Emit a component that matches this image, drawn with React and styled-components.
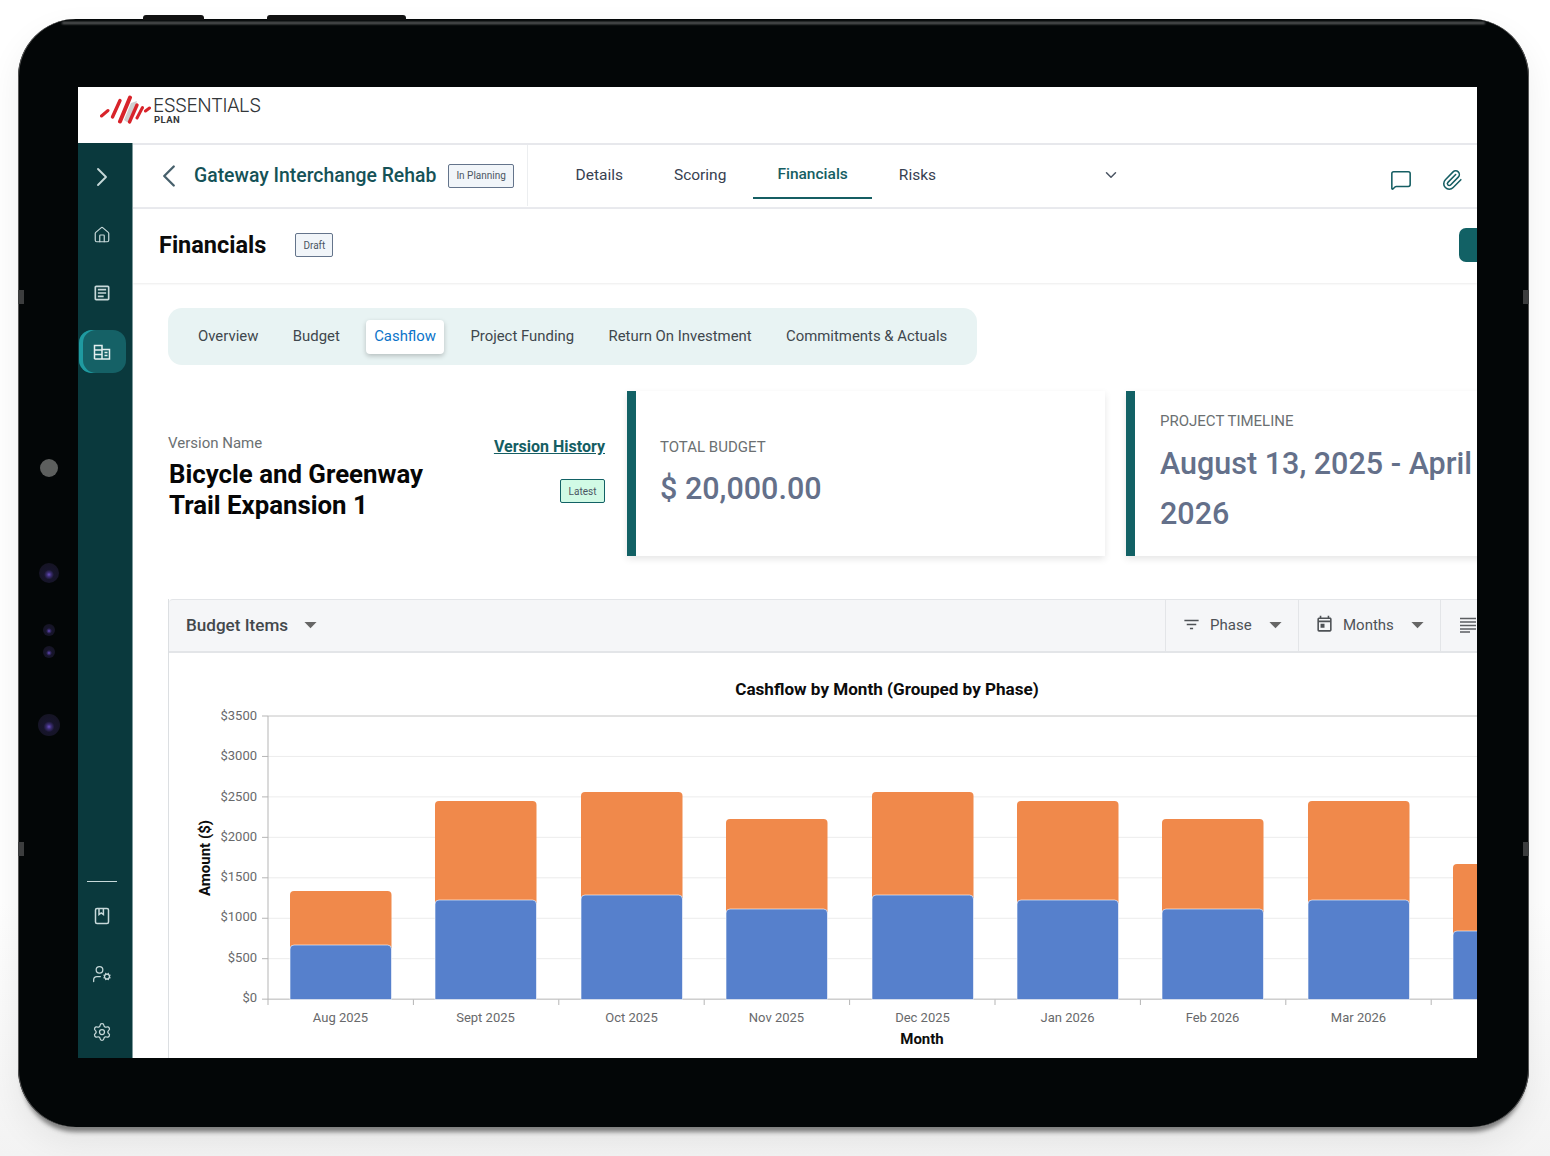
import React from "react";
import styled, { createGlobalStyle } from "styled-components";
import { ChevronRight, ChevronLeft, ChevronDown, House, UserCog, Settings, MessageSquare, Paperclip } from "lucide-react";
import { MdOutlineArticle, MdFilterList, MdOutlineToday, MdArrowDropDown } from "react-icons/md";

const Global = createGlobalStyle`
  html, body { margin: 0; padding: 0; width: 1550px; height: 1156px; overflow: hidden; background: linear-gradient(#fff 0, #fff 78%, #f3f3f3 100%); }
  * { box-sizing: border-box; }
  body { font-family: Roboto, "Liberation Sans", sans-serif; }
`;

const Stage = styled.div`
  width: 1550px;
  height: 1156px;
  padding: 19px 21px 29px 18px;
`;
const Device = styled.div`
  position: relative;
  width: 1511px;
  height: 1108px;
  padding: 68px 52px 69px 60px;
  background: #030607;
  border-radius: 58px;
  box-shadow: inset 1px 0 0 #555, inset -1px 0 0 #555, 0 9px 4px -4px rgba(60, 60, 60, 0.6), 0 14px 34px rgba(0, 0, 0, 0.07);
  &::before {
    content: "";
    position: absolute;
    left: 44px;
    right: 44px;
    top: 3px;
    height: 2px;
    background: #6a6c6d;
    filter: blur(1px);
  }
`;
const TopKey = styled.span`
  position: absolute;
  top: -4px;
  left: ${(p) => p.$x}px;
  width: ${(p) => p.$w}px;
  height: 5px;
  background: #111;
  border-radius: 3px 3px 0 0;
`;
const SideKey = styled.span`
  position: absolute;
  top: ${(p) => p.$y}px;
  ${(p) => (p.$right ? "right: 0;" : "left: 0;")}
  width: 6px;
  height: 14px;
  background: #3c3d3e;
`;
const Lens = styled.span`
  position: absolute;
  left: ${(p) => 31 - p.$r}px;
  top: ${(p) => p.$y - p.$r}px;
  width: ${(p) => p.$r * 2}px;
  height: ${(p) => p.$r * 2}px;
  border-radius: 50%;
  background: ${(p) => p.$plain ? "#5d5f5e" : "radial-gradient(circle at 50% 58%, #6a4fc0 0, #3b2d72 14%, #17152c 32%, #14131f 100%)"};
`;
const Screen = styled.div`
  width: 1399px;
  height: 971px;
  background: #fff;
  overflow: hidden;
  display: flex;
  flex-direction: column;
`;
const TopBar = styled.header`
  height: 56px;
  flex: none;
  display: flex;
  align-items: flex-start;
  padding: 8px 0 0 22px;
  gap: 2px;
`;
const LogoWords = styled.div`
  display: flex;
  flex-direction: column;
  color: #33373a;
`;
const LogoName = styled.span`
  font-size: 19px;
  font-weight: 300;
  line-height: 21px;
  letter-spacing: -0.6px;
  font-family: Inter, Roboto, sans-serif;
`;
const LogoPlan = styled.span`
  font-size: 9.5px;
  font-weight: 700;
  line-height: 11px;
  letter-spacing: 0.4px;
  margin: -2px 0 0 1px;
`;
const Body = styled.div`
  flex: 1;
  min-height: 0;
  display: flex;
`;
const SideRail = styled.nav`
  width: 55px;
  flex: none;
  background: #0a393d;
  display: flex;
  flex-direction: column;
  padding: 4px 0 0;
  color: #c7d9da;
  border-right: 1px solid #7f9a9c;
`;
const RailItem = styled.div`
  flex: none;
  height: 58px;
  display: flex;
  align-items: center;
  justify-content: center;
  padding-right: 6px;
  &:first-child { height: 59px; }
`;
const ActivePill = styled.div`
  width: 47px;
  height: 43px;
  margin-top: 1px;
  border-radius: 13px;
  background: #156166;
  box-shadow: inset 4px 0 0 #1f9aa0;
  display: flex;
  align-items: center;
  justify-content: center;
`;
const RailFoot = styled.div`
  margin-top: auto;
  margin-bottom: -3px;
  display: flex;
  flex-direction: column;
`;
const RailRule = styled.div`
  width: 30px;
  height: 1px;
  background: #c7d9da;
  margin: 0 0 5px 9px;
`;
const Main = styled.main`
  flex: 1;
  min-width: 0;
  display: flex;
  flex-direction: column;
  border-top: 2px solid #e7e8ec;
  overflow: hidden;
`;
const NavBar = styled.div`
  height: 64px;
  flex: none;
  display: flex;
  align-items: stretch;
  border-bottom: 2px solid #e9eaee;
`;
const Crumb = styled.div`
  width: 395px;
  flex: none;
  display: flex;
  align-items: center;
  margin-bottom: 1px;
  padding: 0 0 0 17px;
  border-right: 1px solid #eceef0;
  color: #47606c;
`;
const ProjectName = styled.h1`
  margin: 0 0 0 6px;
  font-size: 19.4px;
  font-weight: 500;
  color: #155257;
  white-space: nowrap;
`;
const Chip = styled.span`
  display: inline-flex;
  align-items: center;
  justify-content: center;
  height: 24px;
  padding: 0 7px;
  border: 1px solid #64748b;
  border-radius: 2px;
  background: #f1f5f9;
  color: #4b5563;
  font-size: 10px;
  margin-left: ${(p) => p.$ml || 0}px;
  white-space: nowrap;
`;
const NavTabs = styled.div`
  display: flex;
  margin-left: 23px;
  gap: 2px;
`;
const NavTab = styled.div`
  padding: ${(p) => (p.$on ? 5 : 7)}px 24.5px 0;
  display: flex;
  align-items: center;
  height: 54px;
  font-size: 15.5px;
  color: ${(p) => (p.$on ? "#155e63" : "#374151")};
  font-weight: ${(p) => (p.$on ? 500 : 400)};
  border-bottom: 2px solid ${(p) => (p.$on ? "#155e63" : "transparent")};
  white-space: nowrap;
`;
const NavCaret = styled.div`
  display: flex;
  align-items: flex-start;
  padding-top: 21px;
  margin-left: 141px;
  color: #4b5563;
`;
const NavTools = styled.div`
  margin-left: 270px;
  display: flex;
  gap: 29px;
  padding-top: 24px;
  color: #155e63;
`;
const PageHead = styled.div`
  height: 74px;
  flex: none;
  display: flex;
  align-items: center;
  padding: 0 0 2px 26px;
  box-shadow: 0 1px 2px rgba(0, 0, 0, 0.08);
`;
const PageTitle = styled.h2`
  margin: 0;
  font-size: 23.5px;
  font-weight: 700;
  color: #0b0b0b;
`;
const HeadAction = styled.div`
  margin-left: auto;
  margin-right: -60px;
  width: 78px;
  height: 34px;
  border-radius: 7px;
  background: #126165;
`;
const Content = styled.div`
  padding: 25px 0 0 35px;
  display: flex;
  flex-direction: column;
`;
const SubTabs = styled.div`
  align-self: flex-start;
  display: flex;
  align-items: center;
  gap: 17.4px;
  height: 57px;
  padding: 0 21.5px;
  background: #e8f3f3;
  border-radius: 14px;
`;
const SubTab = styled.div`
  height: 34px;
  display: flex;
  align-items: center;
  padding: 0 8.5px 1px;
  border-radius: 4px;
  font-size: 14.9px;
  color: ${(p) => (p.$on ? "#0b74c9" : "#3f474d")};
  background: ${(p) => (p.$on ? "#fff" : "transparent")};
  box-shadow: ${(p) => (p.$on ? "0 2px 5px rgba(0,0,0,.22)" : "none")};
  white-space: nowrap;
`;
const Summary = styled.section`
  display: flex;
  margin-top: 26px;
  height: 165px;
  flex: none;
`;
const VersionBlock = styled.div`
  width: 437px;
  flex: none;
  margin-right: 22px;
  display: flex;
  justify-content: space-between;
  padding-top: 43px;
`;
const VersionLabel = styled.div`
  font-size: 15px;
  line-height: 18px;
  color: #6b7072;
`;
const VersionTitle = styled.div`
  margin: 7px 0 0 1px;
  font-size: 25.8px;
  line-height: 31px;
  font-weight: 700;
  color: #060606;
  width: 270px;
`;
const VersionSide = styled.div`
  display: flex;
  flex-direction: column;
  align-items: flex-end;
  gap: 23px;
  padding-top: 3px;
`;
const HistoryLink = styled.a`
  font-size: 16px;
  line-height: 19px;
  font-weight: 700;
  color: #155e63;
  text-decoration: underline;
  white-space: nowrap;
`;
const LatestChip = styled(Chip)`
  width: 45px;
  height: 24px;
  padding: 0;
  border-color: #126165;
  background: #d1fae5;
`;
const StatCard = styled.div`
  width: 478px;
  flex: none;
  margin-right: 21px;
  border-left: 9px solid #126165;
  padding: ${(p) => (p.$tall ? "21px 0 0 25px" : "47px 0 0 24px")};
  box-shadow: 0 3px 7px rgba(0, 0, 0, 0.1);
`;
const StatLabel = styled.div`
  font-size: 15px;
  line-height: 18px;
  color: #6b7072;
`;
const StatValue = styled.div`
  margin-top: ${(p) => (p.$tall ? 9 : 8)}px;
  font-size: 30.5px;
  line-height: 50px;
  font-weight: 500;
  color: #64708a;
  max-width: 320px;
`;
const ChartPanel = styled.section`
  margin-top: 43px;
  width: 1400px;
  flex: none;
  border-left: 1px solid #dcdfe2;
`;
const PanelHead = styled.div`
  height: 54px;
  display: flex;
  align-items: stretch;
  background: #f5f6f8;
  border: 1px solid #e3e5e8;
  border-left: 0;
  border-bottom-width: 2px;
  border-radius: 4px 0 0 0;
`;
const PanelName = styled.div`
  display: flex;
  align-items: center;
  flex: 0 0 996px;
  padding: 0 0 2px 17px;
  gap: 8px;
  font-size: 17.1px;
  font-weight: 500;
  color: #43484c;
`;
const PanelCell = styled.div`
  width: ${(p) => p.$w}px;
  flex: none;
  border-left: 1px solid #e3e5e8;
  display: flex;
  align-items: center;
  padding: 0 0 2px ${(p) => p.$pad || 16}px;
  font-size: 15px;
  color: #4e5256;
  > svg:first-child { margin-right: 9px; }
`;
const CaretEnd = styled.span`
  display: flex;
  margin-left: auto;
  margin-right: 8px;
`;
const Figure = styled.svg`
  display: block;
  font-family: Roboto, "Liberation Sans", sans-serif;
`;
const AxisLabel = styled.text`
  font-size: 13px;
  fill: #68696b;
`;
const AxisTitle = styled.text`
  font-size: 15px;
  font-weight: 700;
  fill: #0c0c0c;
`;
const ChartTitle = styled.text`
  font-size: 17.1px;
  font-weight: 700;
  fill: #0c0c0c;
`;

const bars = [
  ["Aug 2025", 290, 945, 891],
  ["Sept 2025", 435, 900, 801],
  ["Oct 2025", 581, 895, 792],
  ["Nov 2025", 726, 909, 819],
  ["Dec 2025", 872, 895, 792],
  ["Jan 2026", 1017, 900, 801],
  ["Feb 2026", 1162, 909, 819],
  ["Mar 2026", 1308, 900, 801],
  ["", 1453, 931, 864],
];
const ticks = ["$3500", "$3000", "$2500", "$2000", "$1500", "$1000", "$500", "$0"];
const Y0 = 999.5;
const topBar = (x, top, bottom) =>
  `M${x} ${bottom}V${top + 4}Q${x} ${top} ${x + 4} ${top}H${x + 97.5}Q${x + 101.5} ${top} ${x + 101.5} ${top + 4}V${bottom}Z`;

const Chart = () => (
  <Figure width="1400" height="405" viewBox="169 653 1400 405">
    <ChartTitle x="887" y="695" textAnchor="middle">Cashflow by Month (Grouped by Phase)</ChartTitle>
    {ticks.map((t, i) => {
      const y = 716 + i * 40.45;
      return (
        <g key={t}>
          <line x1="262" x2="268" y1={y} y2={y} stroke="#b5b5b5" />
          <line x1="268" x2="1500" y1={y} y2={y} stroke={i === 0 ? "#c4c4c4" : i === 7 ? "#b5b5b5" : "#ececec"} />
          <AxisLabel x="257" y={y + 4 - i * 0.2} textAnchor="end">{t}</AxisLabel>
        </g>
      );
    })}
    <line x1="268" x2="268" y1="716" y2="1005" stroke="#b5b5b5" />
    {bars.map(([name, x, blue, orange], i) => (
      <g key={x}>
        <path d={topBar(x, orange, blue + 3)} fill="#f0894b" />
        <path d={topBar(x, blue, Y0)} fill="#5680cc" stroke="#fff" strokeWidth="0.6" />
        <line x1={268 + (i + 1) * 145.4} x2={268 + (i + 1) * 145.4} y1={Y0} y2="1005" stroke="#b5b5b5" />
        {name && <AxisLabel x={x + 50.5} y="1022" textAnchor="middle">{name}</AxisLabel>}
      </g>
    ))}
    <AxisTitle x="922" y="1044" textAnchor="middle">Month</AxisTitle>
    <AxisTitle transform="translate(210 858) rotate(-90)" textAnchor="middle">Amount ($)</AxisTitle>
  </Figure>
);

const Logo = () => (
  <svg width="51" height="30" viewBox="0 0 51 30">
    <path d="M24 25 L31 8 L37 6 L31 27 Q27 28 24 25Z" fill="#cfcfcf" />
    <g stroke="#d8232a" fill="none" strokeLinecap="round">
      <path d="M1.5 21 L8 15.5" strokeWidth="3" />
      <path d="M12.5 22 L20 5.5" strokeWidth="3.4" />
      <path d="M20 26.5 L30 2.5" strokeWidth="4" />
      <path d="M29.5 27 L37 10" strokeWidth="3.4" />
      <path d="M37 23 L42.5 12.5" strokeWidth="3" />
      <path d="M45.5 16 L49.5 13" strokeWidth="3" />
    </g>
  </svg>
);

const BuildingIcon = () => (
  <svg width="18" height="18" viewBox="0 0 18 18" fill="none" stroke="#e3eeee" strokeWidth="1.5">
    <path d="M1.5 16V2.5H9V16M9 6.5H16.5V16H1.5" />
    <path d="M1.5 7H9M1.5 11.5H9M11.5 9.5H14.5M11.5 12.5H14.5" />
  </svg>
);

const BookIcon = () => (
  <svg width="16" height="18" viewBox="0 0 16 18" fill="none" stroke="currentColor" strokeWidth="1.5">
    <rect x="1.5" y="1.5" width="13" height="15" rx="1.5" />
    <path d="M5 1.5V7.5L7.2 6L9.4 7.5V1.5" />
  </svg>
);

const LinesIcon = () => (
  <svg width="16" height="16" viewBox="0 0 16 16" stroke="#5b5e61" strokeWidth="1.3">
    <path d="M0 1.5H16M0 5H16M0 8.5H16M0 12H16M0 15H10" />
  </svg>
);

export default function App() {
  return (
    <Stage>
      <Global />
      <Device>
        <TopKey $x={125} $w={61} />
        <TopKey $x={249} $w={139} />
        <SideKey $y={271} />
        <SideKey $y={823} />
        <SideKey $y={271} $right />
        <SideKey $y={823} $right />
        <Lens $y={449} $r={9} $plain />
        <Lens $y={554} $r={10} />
        <Lens $y={611} $r={6} />
        <Lens $y={633} $r={6} />
        <Lens $y={706} $r={11} />
        <Screen>
          <TopBar>
            <Logo />
            <LogoWords>
              <LogoName>ESSENTIALS</LogoName>
              <LogoPlan>PLAN</LogoPlan>
            </LogoWords>
          </TopBar>
          <Body>
            <SideRail>
              <RailItem><ChevronRight size={32} strokeWidth={1.4} /></RailItem>
              <RailItem><House size={18} strokeWidth={1.6} /></RailItem>
              <RailItem><MdOutlineArticle size={20} /></RailItem>
              <RailItem><ActivePill><BuildingIcon /></ActivePill></RailItem>
              <RailFoot>
                <RailRule />
                <RailItem><BookIcon /></RailItem>
                <RailItem><UserCog size={20} strokeWidth={1.5} /></RailItem>
                <RailItem><Settings size={20} strokeWidth={1.5} /></RailItem>
              </RailFoot>
            </SideRail>
            <Main>
              <NavBar>
                <Crumb>
                  <ChevronLeft size={38} strokeWidth={1.5} />
                  <ProjectName>Gateway Interchange Rehab</ProjectName>
                  <Chip $ml={12}>In Planning</Chip>
                </Crumb>
                <NavTabs>
                  <NavTab>Details</NavTab>
                  <NavTab>Scoring</NavTab>
                  <NavTab $on>Financials</NavTab>
                  <NavTab>Risks</NavTab>
                </NavTabs>
                <NavCaret><ChevronDown size={18} /></NavCaret>
                <NavTools>
                  <MessageSquare size={22} strokeWidth={1.7} />
                  <Paperclip size={22} strokeWidth={1.7} />
                </NavTools>
              </NavBar>
              <PageHead>
                <PageTitle>Financials</PageTitle>
                <Chip $ml={29}>Draft</Chip>
                <HeadAction />
              </PageHead>
              <Content>
                <SubTabs>
                  <SubTab>Overview</SubTab>
                  <SubTab>Budget</SubTab>
                  <SubTab $on>Cashflow</SubTab>
                  <SubTab>Project Funding</SubTab>
                  <SubTab>Return On Investment</SubTab>
                  <SubTab>Commitments &amp; Actuals</SubTab>
                </SubTabs>
                <Summary>
                  <VersionBlock>
                    <div>
                      <VersionLabel>Version Name</VersionLabel>
                      <VersionTitle>Bicycle and Greenway Trail Expansion 1</VersionTitle>
                    </div>
                    <VersionSide>
                      <HistoryLink>Version History</HistoryLink>
                      <LatestChip>Latest</LatestChip>
                    </VersionSide>
                  </VersionBlock>
                  <StatCard>
                    <StatLabel>TOTAL BUDGET</StatLabel>
                    <StatValue>$ 20,000.00</StatValue>
                  </StatCard>
                  <StatCard $tall>
                    <StatLabel>PROJECT TIMELINE</StatLabel>
                    <StatValue $tall>August 13, 2025 - April 2026</StatValue>
                  </StatCard>
                </Summary>
                <ChartPanel>
                  <PanelHead>
                    <PanelName>Budget Items <MdArrowDropDown size={29} color="#666" /></PanelName>
                    <PanelCell $w={133}>
                      <MdFilterList size={19} />Phase
                      <CaretEnd><MdArrowDropDown size={29} color="#666" /></CaretEnd>
                    </PanelCell>
                    <PanelCell $w={142}>
                      <MdOutlineToday size={19} />Months
                      <CaretEnd><MdArrowDropDown size={29} color="#666" /></CaretEnd>
                    </PanelCell>
                    <PanelCell $w={60} $pad={19}><LinesIcon /></PanelCell>
                  </PanelHead>
                  <Chart />
                </ChartPanel>
              </Content>
            </Main>
          </Body>
        </Screen>
      </Device>
    </Stage>
  );
}
